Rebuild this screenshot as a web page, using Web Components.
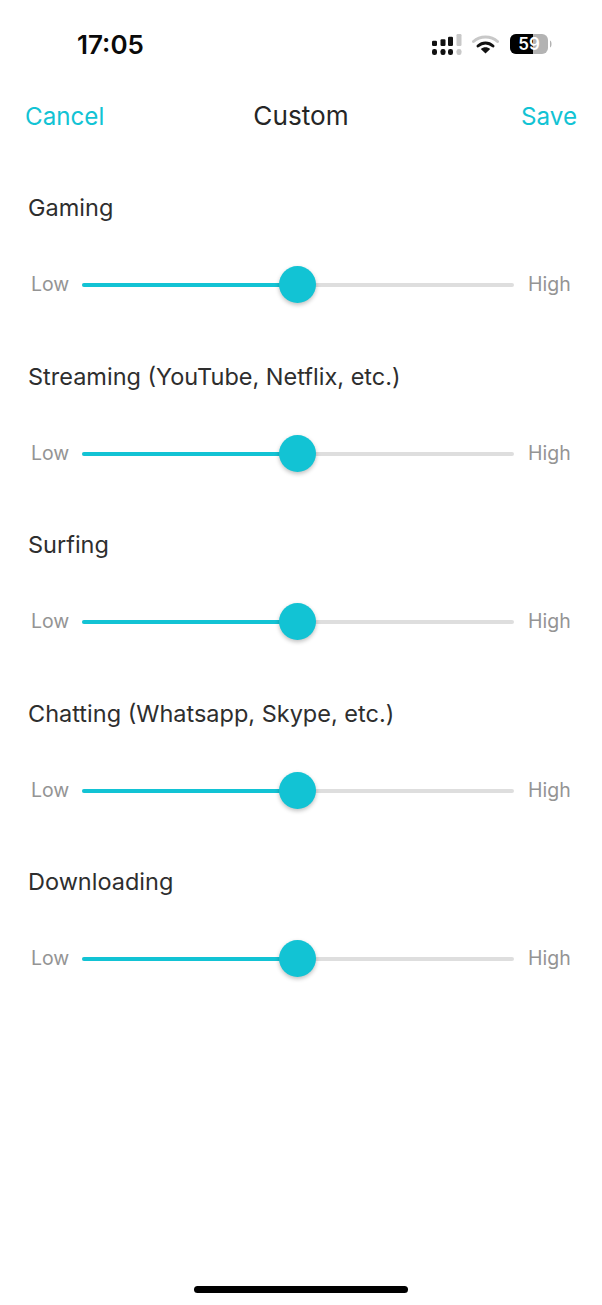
<!DOCTYPE html>
<html>
<head>
<meta charset="utf-8">
<style>
html, body { margin: 0; background: #fff; }
body { width: 602px; height: 1305px; overflow: hidden; font-family: Inter, "Liberation Sans", sans-serif; display: flex; flex-direction: column; }
</style>
</head>
<body>
<status-bar></status-bar>
<nav-bar></nav-bar>
<main-list>
    <level-row>Gaming</level-row>
    <level-row>Streaming (YouTube, Netflix, etc.)</level-row>
    <level-row>Surfing</level-row>
    <level-row>Chatting (Whatsapp, Skype, etc.)</level-row>
    <level-row>Downloading</level-row>
</main-list>
<home-bar></home-bar>

<script>
class StatusBar extends HTMLElement {
    connectedCallback() {
        this.attachShadow({ mode: 'open' });
        this.shadowRoot.innerHTML = `
            <style>
                :host {
                    display: flex;
                    align-items: center;
                    justify-content: space-between;
                    height: 34px;
                    padding: 28px 49px 28px 77px;
                    color: #0a0a0a;
                }
                .time {
                    font: 600 26px Inter, "Liberation Sans", sans-serif;
                    margin-top: -2px;
                }
                .icons {
                    display: flex;
                    align-items: center;
                    gap: 11px;
                }
                svg { display: block; }
                .signal { margin-right: -1px; }
                .battery { margin-top: -3px; }
                .battery-label {
                    font: 600 17px Inter, "Liberation Sans", sans-serif;
                    fill: #fff;
                }
            </style>
            <span class="time">17:05</span>
            <div class="icons">
                <svg class="signal" width="31" height="22" viewBox="0 0 31 22">
                    <rect x="1" y="6.700" width="5" height="5.300" rx="1.2" fill="#111"/>
                    <rect x="9.500" y="5.300" width="5" height="6.700" rx="1.2" fill="#111"/>
                    <rect x="17" y="2.700" width="5" height="9.300" rx="1.2" fill="#111"/>
                    <rect x="25.500" y="0" width="5" height="12" rx="1.2" fill="#c8c8c8"/>
                    <rect x="1" y="15" width="5" height="6" rx="2.200" fill="#111"/>
                    <rect x="9.500" y="15" width="5" height="6" rx="2.200" fill="#111"/>
                    <rect x="17" y="15" width="5" height="6" rx="2.200" fill="#111"/>
                    <rect x="25.500" y="15" width="5" height="6" rx="2.200" fill="#c8c8c8"/>
                </svg>
                <svg width="27" height="20" viewBox="0 0 27 20">
                    <path d="M1.500 6.500C8 .5 19 .5 25.500 6.500" fill="none" stroke="#c8c8c8" stroke-width="3" stroke-linecap="round"/>
                    <path d="M6 11C10.500 7 16.500 7 21 11" fill="none" stroke="#111" stroke-width="3" stroke-linecap="round"/>
                    <path d="M8.800 14C11.500 11.700 15.500 11.700 18.200 14L13.500 18.500Z" fill="#111"/>
                </svg>
                <svg class="battery" width="43" height="20" viewBox="0 0 43 20">
                    <rect x="0" y="0" width="38" height="20" rx="6" fill="#b3b3b3"/>
                    <path d="M6 0H23V20H6A6 6 0 0 1 0 14V6A6 6 0 0 1 6 0Z" fill="#000"/>
                    <path d="M40 6.500C42 7 42 13 40 13.500Z" fill="#b3b3b3"/>
                    <text class="battery-label" x="19" y="16" text-anchor="middle">59</text>
                </svg>
            </div>
        `;
    }
}

class NavBar extends HTMLElement {
    connectedCallback() {
        this.attachShadow({ mode: 'open' });
        this.shadowRoot.innerHTML = `
            <style>
                :host {
                    display: grid;
                    grid-template-columns: 1fr auto 1fr;
                    align-items: center;
                    height: 32px;
                    padding: 0 25px;
                    margin-top: 10px;
                    font: 24.200px Inter, "Liberation Sans", sans-serif;
                    color: #12c3d4;
                }
                .title {
                    font-size: 26.200px;
                    line-height: 30px;
                    color: #262626;
                }
                .save { text-align: right; }
            </style>
            <span>Cancel</span>
            <span class="title">Custom</span>
            <span class="save">Save</span>
        `;
    }
}

class MainList extends HTMLElement {
    connectedCallback() {
        this.attachShadow({ mode: 'open' });
        this.shadowRoot.innerHTML = `
            <style>
                :host {
                    display: flex;
                    flex-direction: column;
                    gap: 51.500px;
                    padding: 60px 31px 0 28px;
                    flex: 1;
                }
            </style>
            <slot></slot>
        `;
    }
}

class LevelRow extends HTMLElement {
    connectedCallback() {
        this.attachShadow({ mode: 'open' });
        this.shadowRoot.innerHTML = `
            <style>
                :host {
                    display: flex;
                    flex-direction: column;
                    gap: 37px;
                }
                .label {
                    height: 32px;
                    line-height: 31px;
                    font-size: 23.500px;
                    color: #2e2e2e;
                    white-space: nowrap;
                }
                .slider {
                    display: flex;
                    align-items: center;
                    height: 48px;
                    font-size: 19.500px;
                    line-height: 22px;
                    color: #949494;
                }
                .low { width: 54px; padding: 0 0 2px 3px; box-sizing: border-box; }
                .high { margin-left: 14px; padding-bottom: 2px; }
                .track {
                    position: relative;
                    width: 432px;
                    height: 4px;
                    border-radius: 2px;
                    background: #dedede;
                }
                .fill {
                    width: 50%;
                    height: 100%;
                    border-radius: 2px;
                    background: #12c3d4;
                }
                .thumb {
                    position: absolute;
                    left: 197px;
                    top: -17px;
                    width: 37px;
                    height: 37px;
                    border-radius: 50%;
                    background: #12c3d4;
                    box-shadow: 0 2px 4px rgba(0,0,0,0.25);
                }
            </style>
            <div class="label"><slot></slot></div>
            <div class="slider">
                <span class="low">Low</span>
                <div class="track">
                    <div class="fill"></div>
                    <div class="thumb"></div>
                </div>
                <span class="high">High</span>
            </div>
        `;
    }
}

class HomeBar extends HTMLElement {
    connectedCallback() {
        this.attachShadow({ mode: 'open' });
        this.shadowRoot.innerHTML = `
            <style>
                :host {
                    display: flex;
                    justify-content: center;
                    padding-bottom: 12px;
                }
                div {
                    width: 214px;
                    height: 7px;
                    border-radius: 4px;
                    background: #000;
                }
            </style>
            <div></div>
        `;
    }
}

customElements.define('status-bar', StatusBar);
customElements.define('nav-bar', NavBar);
customElements.define('main-list', MainList);
customElements.define('level-row', LevelRow);
customElements.define('home-bar', HomeBar);
</script>
</body>
</html>
